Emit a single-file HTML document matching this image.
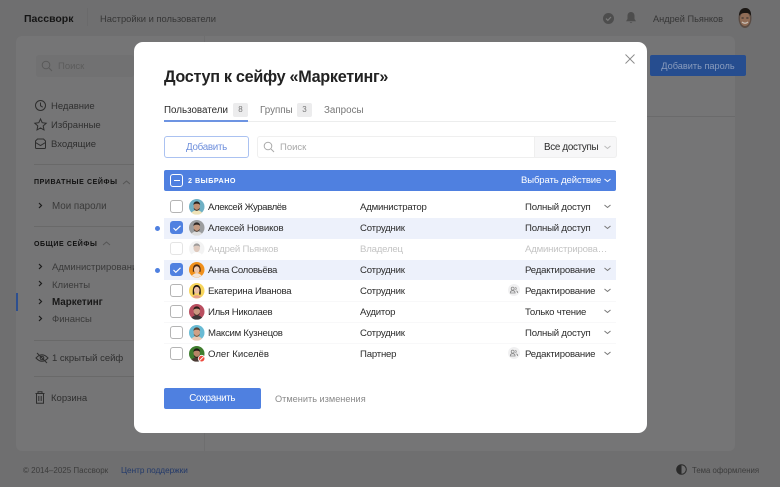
<!DOCTYPE html>
<html lang="ru"><head><meta charset="utf-8"><title>Пассворк</title>
<style>
*{box-sizing:border-box}
html,body{margin:0;padding:0}
body{width:780px;height:487px;position:relative;overflow:hidden;background:#6f6f70;font-family:"Liberation Sans","DejaVu Sans",sans-serif;font-size:10px;color:#2b2b2b}
.a,.t{position:absolute}
.t{white-space:nowrap;line-height:12px;height:12px;transform:translateY(1px)}
.r{margin-top:1px;font-size:9.6px;letter-spacing:-.2px}
.bgt{color:#2f2f2f}
.cb{position:absolute;left:170px;width:13px;height:13px;border:1px solid #b4b4b4;border-radius:3px;background:#fff}
.cb.on{background:#4f80e0;border-color:#4f80e0}
.cb.dis{border-color:#e4e4e4}
.av{position:absolute;left:188.5px;width:15.5px;height:15.5px}
.sep{position:absolute;left:164px;width:452px;height:1px;background:#f8f8f9}
svg{position:absolute;display:block;overflow:visible}
</style></head><body>

<!-- background app -->
<div class="a" style="left:16px;top:36px;width:719px;height:415px;background:#757576;border-radius:6px"></div>
<div class="a" style="left:204px;top:36px;width:1px;height:415px;background:#6e6e6f"></div>
<div class="a" style="left:205px;top:116px;width:530px;height:1px;background:#6a6a6b"></div>
<div class="a" style="left:87px;top:8px;width:1px;height:18px;background:#6a6a6b"></div>
<div class="t" style="left:24px;top:12px;font-size:10.5px;font-weight:bold;color:#151515">Пассворк</div>
<div class="t bgt" style="left:100px;top:12px;font-size:9.4px;color:#363636">Настройки и пользователи</div>
<svg style="left:602px;top:12px" width="13" height="13" viewBox="0 0 13 13"><circle cx="6.5" cy="6.5" r="5.5" fill="#4d4d4d"/><path d="M4 6.6l1.800 1.800L9 5" fill="none" stroke="#7a7a7a" stroke-width="1.2"/></svg>
<svg style="left:625px;top:11px" width="12" height="14" viewBox="0 0 12 14"><path d="M6 1C3.600 1 2.500 2.900 2.500 5v3L1 10.200h10L9.500 8V5C9.500 2.900 8.400 1 6 1z M4.700 11.200a1.400 1.400 0 0 0 2.600 0z" fill="#4d4d4d"/></svg>
<div class="t" style="left:653px;top:12px;font-size:9.2px;color:#363636">Андрей Пьянков</div>
<svg style="left:737px;top:8px" width="16" height="21" viewBox="0 0 16 21"><ellipse cx="8" cy="10" rx="6.500" ry="10" fill="#5a4c44"/><ellipse cx="8" cy="11" rx="5" ry="7" fill="#8f6c56"/><path d="M2 8C2 2 5 0 8.500 0S14.500 3 14 8C12.500 5 11 5 8 5S3.500 6 2 8z" fill="#1a1613"/><path d="M5 14q3 2.500 6 0" fill="none" stroke="#c8c0b8" stroke-width="1.200"/><rect x="4.500" y="9.500" width="2.200" height="1" fill="#2a2a2a"/><rect x="9.300" y="9.500" width="2.200" height="1" fill="#2a2a2a"/></svg>

<!-- sidebar -->
<div class="a" style="left:36px;top:55px;width:98px;height:22px;background:#717172;border-radius:3px"></div>
<svg style="left:41px;top:60px" width="12" height="12" viewBox="0 0 12 12" fill="none" stroke="#5a5a5a"><circle cx="5" cy="5" r="3.800"/><path d="M8 8l3 3"/></svg>
<div class="t" style="left:58px;top:60px;font-size:9.500px;color:#5c5c5c">Поиск</div>
<svg style="left:34px;top:99px" width="13" height="13" viewBox="0 0 13 13" fill="none" stroke="#2e2e2e"><circle cx="6.500" cy="6.500" r="5"/><path d="M6.500 3.500v3.200l2.200 1.500"/></svg>
<div class="t bgt" style="left:51px;top:100px;font-size:9.500px">Недавние</div>
<svg style="left:34px;top:118px" width="13" height="13" viewBox="0 0 13 13" fill="none" stroke="#2e2e2e"><path d="M6.500 1l1.700 3.700 4 .5-3 2.700.8 4-3.500-2-3.500 2 .8-4-3-2.700 4-.5z"/></svg>
<div class="t bgt" style="left:51px;top:119px;font-size:9.500px">Избранные</div>
<svg style="left:34px;top:137px" width="13" height="13" viewBox="0 0 13 13" fill="none" stroke="#2e2e2e"><path d="M1.500 7V4L3.500 2h6l2 2v6.500a1 1 0 0 1-1 1h-8a1 1 0 0 1-1-1z M1.500 5.500l5 3 5-3"/></svg>
<div class="t bgt" style="left:51px;top:138px;font-size:9.500px">Входящие</div>
<div class="a" style="left:34px;top:164px;width:100px;height:1px;background:#696969"></div>
<div class="t" style="left:34px;top:176px;font-size:7px;font-weight:bold;letter-spacing:.6px;color:#111">ПРИВАТНЫЕ СЕЙФЫ</div>
<svg style="left:122px;top:180px" width="9" height="5" fill="none" stroke="#555"><path d="M1 4l3.500-3L8 4"/></svg>
<svg style="left:38px;top:202px" width="5" height="7" fill="none" stroke="#1c1c1c" stroke-width="1.200"><path d="M1 1l2.500 2.500L1 6"/></svg>
<div class="t bgt" style="left:52px;top:200px;font-size:9.800px;color:#3a3a3a">Мои пароли</div>
<div class="a" style="left:34px;top:226px;width:100px;height:1px;background:#696969"></div>
<div class="t" style="left:34px;top:238px;font-size:7px;font-weight:bold;letter-spacing:.6px;color:#111">ОБЩИЕ СЕЙФЫ</div>
<svg style="left:102px;top:241px" width="9" height="5" fill="none" stroke="#555"><path d="M1 4l3.500-3L8 4"/></svg>
<svg style="left:38px;top:263px" width="5" height="7" fill="none" stroke="#1c1c1c" stroke-width="1.200"><path d="M1 1l2.500 2.500L1 6"/></svg>
<div class="t bgt" style="left:52px;top:261px;font-size:9.500px;color:#3a3a3a">Администрирование</div>
<svg style="left:38px;top:280px" width="5" height="7" fill="none" stroke="#1c1c1c" stroke-width="1.200"><path d="M1 1l2.500 2.500L1 6"/></svg>
<div class="t bgt" style="left:52px;top:279px;font-size:9.500px;color:#3a3a3a">Клиенты</div>
<svg style="left:38px;top:298px" width="5" height="7" fill="none" stroke="#1c1c1c" stroke-width="1.200"><path d="M1 1l2.500 2.500L1 6"/></svg>
<div class="t" style="left:52px;top:296px;font-size:9.800px;font-weight:bold;color:#181818">Маркетинг</div>
<svg style="left:38px;top:315px" width="5" height="7" fill="none" stroke="#1c1c1c" stroke-width="1.200"><path d="M1 1l2.500 2.500L1 6"/></svg>
<div class="t bgt" style="left:52px;top:313px;font-size:9.500px;color:#3a3a3a">Финансы</div>
<div class="a" style="left:16px;top:293px;width:2px;height:18px;background:#2d4f8f"></div>
<div class="a" style="left:34px;top:340px;width:100px;height:1px;background:#696969"></div>
<svg style="left:35px;top:352px" width="14" height="12" viewBox="0 0 14 12" fill="none" stroke="#2e2e2e"><path d="M1 6q6-6.500 12 0q-6 6.500-12 0z M2 1l10 10"/><circle cx="7" cy="6" r="1.800"/></svg>
<div class="t bgt" style="left:52px;top:352px;font-size:9.500px">1 скрытый сейф</div>
<div class="a" style="left:34px;top:376px;width:100px;height:1px;background:#696969"></div>
<svg style="left:35px;top:391px" width="10" height="13" viewBox="0 0 10 13" fill="none" stroke="#2e2e2e"><path d="M.5 2.500h9 M3 2.500V.8h4v1.700 M1.500 2.500v9.700h7V2.500 M3.800 5v5 M6.200 5v5"/></svg>
<div class="t bgt" style="left:51px;top:392px;font-size:9.500px">Корзина</div>

<!-- add password -->
<div class="a" style="left:650px;top:55px;width:96px;height:21px;background:#264d8f;border-radius:2px"></div>
<div class="t" style="left:650px;top:59px;width:96px;text-align:center;font-size:9.200px;color:#8a9cbd">Добавить пароль</div>

<!-- footer -->
<div class="t" style="left:23px;top:464px;font-size:8px;color:#3c3c3c">© 2014–2025 Пассворк</div>
<div class="t" style="left:121px;top:464px;font-size:8.200px;color:#22396a">Центр поддержки</div>
<svg style="left:676px;top:464px" width="11" height="11" viewBox="0 0 11 11"><circle cx="5.500" cy="5.500" r="4.800" fill="none" stroke="#2a2a2a"/><path d="M5.500.7a4.800 4.800 0 0 0 0 9.600z" fill="#2a2a2a"/></svg>
<div class="t" style="left:692px;top:464px;font-size:7.800px;color:#3c3c3c">Тема оформления</div>

<!-- modal -->
<div class="a" style="left:134px;top:42px;width:512.500px;height:391px;background:#fff;border-radius:9px"></div>
<svg style="left:625px;top:54px" width="10" height="10" viewBox="0 0 10 10" fill="none" stroke="#8a8a8a" stroke-width=".9"><path d="M.5.500l9 9M9.500.500l-9 9"/></svg>
<div class="t" style="left:164px;top:66px;height:20px;line-height:20px;font-size:16.200px;font-weight:bold;letter-spacing:-.3px;color:#222">Доступ к сейфу «Маркетинг»</div>

<!-- tabs -->
<div class="a" style="left:164px;top:121px;width:452px;height:1px;background:#eceded"></div>
<div class="a" style="left:164px;top:120px;width:84px;height:2px;background:#6d94e2"></div>
<div class="t" style="left:164px;top:104px;font-size:9.800px;color:#2a2a2a">Пользователи</div>
<div class="a" style="left:233px;top:102.500px;width:15px;height:14px;background:#ececed;border-radius:2px;font-size:8px;line-height:14px;text-align:center;color:#777">8</div>
<div class="t" style="left:260px;top:104px;font-size:9.800px;color:#777">Группы</div>
<div class="a" style="left:297px;top:102.500px;width:15px;height:14px;background:#ececed;border-radius:2px;font-size:8px;line-height:14px;text-align:center;color:#777">3</div>
<div class="t" style="left:324px;top:104px;font-size:9.800px;color:#777">Запросы</div>

<!-- controls -->
<div class="a" style="left:164px;top:136px;width:85px;height:22px;border:1px solid #abc2f1;border-radius:3px;background:#fff;font-size:9.800px;letter-spacing:-.3px;line-height:21px;text-align:center;color:#6e8fdc">Добавить</div>
<div class="a" style="left:257px;top:136px;width:360px;height:22px;border:1px solid #efefef;border-radius:3px;background:#fff"></div>
<div class="a" style="left:534px;top:136px;width:83px;height:22px;border:1px solid #efefef;border-radius:0 3px 3px 0;background:#f7f7f8"></div>
<svg style="left:263px;top:141px" width="12" height="12" viewBox="0 0 12 12" fill="none" stroke="#aaa"><circle cx="5" cy="5" r="3.800"/><path d="M8 8l3 3"/></svg>
<div class="t" style="left:280px;top:141px;font-size:9.500px;color:#a8a8a8">Поиск</div>
<div class="t" style="left:544px;top:141px;font-size:9.800px;letter-spacing:-.3px;color:#2a2a2a">Все доступы</div>
<svg style="left:604px;top:145px" width="7" height="5" fill="none" stroke="#bbb"><path d="M.5 1l3 2.500 3-2.500"/></svg>

<!-- selection bar -->
<div class="a" style="left:164px;top:170px;width:452px;height:21px;background:#4f80e0;border-radius:2px"></div>
<div class="a" style="left:170px;top:174px;width:13px;height:13px;border:1px solid #fff;border-radius:3px"></div>
<div class="a" style="left:173.500px;top:180px;width:6px;height:1px;background:#fff"></div>
<div class="t" style="left:188px;top:174px;font-size:7.200px;font-weight:bold;letter-spacing:.5px;color:#fff">2 ВЫБРАНО</div>
<div class="t" style="left:521px;top:174px;font-size:9.500px;letter-spacing:-.1px;color:#fff">Выбрать действие</div>
<svg style="left:604px;top:178px" width="7" height="5" fill="none" stroke="#fff"><path d="M.5 1l3 2.500 3-2.500"/></svg>

<!-- rows -->
<div class="a" style="left:164px;top:218px;width:452px;height:20.500px;background:#edf1fb"></div>
<div class="a" style="left:164px;top:259.500px;width:452px;height:20.500px;background:#edf1fb"></div>
<div class="sep" style="top:301px"></div>
<div class="sep" style="top:322px"></div>
<div class="sep" style="top:343px"></div>
<div class="a" style="left:155px;top:226px;width:5px;height:5px;border-radius:50%;background:#4f80e0"></div>
<div class="a" style="left:155px;top:268px;width:5px;height:5px;border-radius:50%;background:#4f80e0"></div>

<div class="cb" style="top:200px"></div>
<div class="cb on" style="top:221px"><svg style="left:2px;top:3px" width="8" height="6" fill="none" stroke="#fff" stroke-width="1.100"><path d="M.5 3l2.300 2.300L7.500.8"/></svg></div>
<div class="cb dis" style="top:242px"></div>
<div class="cb on" style="top:263px"><svg style="left:2px;top:3px" width="8" height="6" fill="none" stroke="#fff" stroke-width="1.100"><path d="M.5 3l2.300 2.300L7.500.8"/></svg></div>
<div class="cb" style="top:284px"></div>
<div class="cb" style="top:305px"></div>
<div class="cb" style="top:326px"></div>
<div class="cb" style="top:347px"></div>

<!-- avatars -->
<svg class="av" style="top:199px" viewBox="0 0 16 16"><circle cx="8" cy="8" r="8" fill="#6fb0c4"/><path d="M2.500 14q5.500-5 11 0a8 8 0 0 1-11 0z" fill="#efe3b8"/><ellipse cx="8" cy="7.500" rx="3.300" ry="4" fill="#c08f72"/><path d="M4.500 6q.5-3.500 3.500-3.500T11.500 6Q10 4.800 8 4.800T4.500 6z" fill="#2a211c"/><path d="M5 9q3 4.500 6 0v1.500q-3 3.500-6 0z" fill="#3a2c24"/></svg>
<svg class="av" style="top:220px" viewBox="0 0 16 16"><circle cx="8" cy="8" r="8" fill="#9b9d9f"/><path d="M2.500 14q5.500-5 11 0a8 8 0 0 1-11 0z" fill="#dcdcdc"/><ellipse cx="8" cy="7.500" rx="3.300" ry="4" fill="#c49a80"/><path d="M4.500 6q.5-3.500 3.500-3.500T11.500 6Q10 4.800 8 4.800T4.500 6z" fill="#2c2623"/><path d="M5 9q3 4.500 6 0v1.500q-3 3.500-6 0z" fill="#4a3a30"/></svg>
<svg class="av" style="top:241px;opacity:.45" viewBox="0 0 16 16"><circle cx="8" cy="8" r="8" fill="#e6e6e6"/><path d="M2.500 14q5.500-5 11 0a8 8 0 0 1-11 0z" fill="#fff"/><ellipse cx="8" cy="7.500" rx="3.300" ry="4" fill="#b98c70"/><path d="M4.500 6q.5-3.500 3.500-3.500T11.500 6Q10 4.800 8 4.800T4.500 6z" fill="#2c2623"/></svg>
<svg class="av" style="top:262px" viewBox="0 0 16 16"><circle cx="8" cy="8" r="8" fill="#f0901c"/><path d="M3 14q5-5 10 0a8 8 0 0 1-10 0z" fill="#f1e4d8"/><path d="M4 10Q3.500 2.500 8 2.500T12 10H10.500V6h-5v4z" fill="#4a2a18"/><ellipse cx="8" cy="8" rx="2.900" ry="3.600" fill="#efc6a8"/></svg>
<svg class="av" style="top:283px" viewBox="0 0 16 16"><circle cx="8" cy="8" r="8" fill="#f7d55c"/><path d="M3.500 14.500q4.500-4 9 0a8 8 0 0 1-9 0z" fill="#e8a08c"/><path d="M4 12Q3 2 8 2t4 10h-1.500V6h-5v6z" fill="#1e1612"/><ellipse cx="8" cy="7.500" rx="2.900" ry="3.600" fill="#ecbea4"/></svg>
<svg class="av" style="top:304px" viewBox="0 0 16 16"><circle cx="8" cy="8" r="8" fill="#b94f60"/><path d="M2.500 14q5.500-5 11 0a8 8 0 0 1-11 0z" fill="#3c3436"/><ellipse cx="8" cy="7.500" rx="3.300" ry="4" fill="#c99880"/><path d="M4.500 6q.5-3.500 3.500-3.500T11.500 6Q10 4.800 8 4.800T4.500 6z" fill="#2a1f1b"/><path d="M5 9q3 4.500 6 0v1.500q-3 3.500-6 0z" fill="#4a3228"/></svg>
<svg class="av" style="top:325px" viewBox="0 0 16 16"><circle cx="8" cy="8" r="8" fill="#69bbd4"/><path d="M2.500 14q5.500-5 11 0a8 8 0 0 1-11 0z" fill="#e9c9b4"/><ellipse cx="8" cy="7.500" rx="3.300" ry="4" fill="#d0a084"/><path d="M4.500 6q.5-3.500 3.500-3.500T11.500 6Q10 4.800 8 4.800T4.500 6z" fill="#5a4232"/><path d="M5 9q3 4.500 6 0v1.500q-3 3.500-6 0z" fill="#6a4c38"/></svg>
<svg class="av" style="top:346px" viewBox="0 0 16 16"><circle cx="8" cy="8" r="8" fill="#3f7d2e"/><path d="M2.500 14q5.500-5 11 0a8 8 0 0 1-11 0z" fill="#4a3a34"/><ellipse cx="8" cy="7.500" rx="3.300" ry="4" fill="#b98468"/><path d="M4.500 6q.5-3.500 3.500-3.500T11.500 6Q10 4.800 8 4.800T4.500 6z" fill="#1d1613"/><path d="M5 9q3 4.500 6 0v1.500q-3 3.500-6 0z" fill="#2a1e18"/><circle cx="13" cy="13" r="3.800" fill="#fff"/><circle cx="13" cy="13" r="3" fill="#ee4b3f"/><path d="M11 15l4-4" stroke="#fff" stroke-width="1"/></svg>

<!-- names -->
<div class="t r" style="left:208px;top:200px;letter-spacing:-.4px">Алексей Журавлёв</div>
<div class="t r" style="left:208px;top:221px;letter-spacing:-.12px">Алексей Новиков</div>
<div class="t r" style="left:208px;top:242px;letter-spacing:-.21px;color:#c4c4c4">Андрей Пьянков</div>
<div class="t r" style="left:208px;top:263px;letter-spacing:-.35px">Анна Соловьёва</div>
<div class="t r" style="left:208px;top:284px;letter-spacing:-.26px">Екатерина Иванова</div>
<div class="t r" style="left:208px;top:305px;letter-spacing:-.32px">Илья Николаев</div>
<div class="t r" style="left:208px;top:326px;letter-spacing:-.25px">Максим Кузнецов</div>
<div class="t r" style="left:208px;top:347px;letter-spacing:-.03px">Олег Киселёв</div>

<!-- roles -->
<div class="t r" style="left:360px;top:200px">Администратор</div>
<div class="t r" style="left:360px;top:221px">Сотрудник</div>
<div class="t r" style="left:360px;top:242px;color:#c4c4c4">Владелец</div>
<div class="t r" style="left:360px;top:263px">Сотрудник</div>
<div class="t r" style="left:360px;top:284px">Сотрудник</div>
<div class="t r" style="left:360px;top:305px">Аудитор</div>
<div class="t r" style="left:360px;top:326px">Сотрудник</div>
<div class="t r" style="left:360px;top:347px">Партнер</div>

<!-- access -->
<div class="t r" style="left:525px;top:200px">Полный доступ</div>
<div class="t r" style="left:525px;top:221px">Полный доступ</div>
<div class="t r" style="left:525px;top:242px;color:#c4c4c4;width:86px;overflow:hidden;text-overflow:ellipsis">Администрирование</div>
<div class="t r" style="left:525px;top:263px">Редактирование</div>
<div class="t r" style="left:525px;top:284px">Редактирование</div>
<div class="t r" style="left:525px;top:305px">Только чтение</div>
<div class="t r" style="left:525px;top:326px">Полный доступ</div>
<div class="t r" style="left:525px;top:347px">Редактирование</div>

<svg style="left:604px;top:204px" width="7" height="5" fill="none" stroke="#777"><path d="M.5 1l3 2.500 3-2.500"/></svg>
<svg style="left:604px;top:225px" width="7" height="5" fill="none" stroke="#777"><path d="M.5 1l3 2.500 3-2.500"/></svg>
<svg style="left:604px;top:267px" width="7" height="5" fill="none" stroke="#777"><path d="M.5 1l3 2.500 3-2.500"/></svg>
<svg style="left:604px;top:288px" width="7" height="5" fill="none" stroke="#777"><path d="M.5 1l3 2.500 3-2.500"/></svg>
<svg style="left:604px;top:309px" width="7" height="5" fill="none" stroke="#777"><path d="M.5 1l3 2.500 3-2.500"/></svg>
<svg style="left:604px;top:330px" width="7" height="5" fill="none" stroke="#777"><path d="M.5 1l3 2.500 3-2.500"/></svg>
<svg style="left:604px;top:351px" width="7" height="5" fill="none" stroke="#777"><path d="M.5 1l3 2.500 3-2.500"/></svg>

<!-- group icons -->
<svg style="left:508px;top:284px" width="12" height="12" viewBox="0 0 12 12"><circle cx="6" cy="6" r="6" fill="#f0f0f1"/><g fill="none" stroke="#888" stroke-width=".8"><circle cx="4.700" cy="4.600" r="1.500"/><path d="M2.300 9q0-2.300 2.400-2.300T7.100 9z"/><path d="M7.300 3.200a1.500 1.500 0 0 1 0 2.800M8.200 6.900q1.500.3 1.500 2.100"/></g></svg>
<svg style="left:508px;top:347px" width="12" height="12" viewBox="0 0 12 12"><circle cx="6" cy="6" r="6" fill="#f0f0f1"/><g fill="none" stroke="#888" stroke-width=".8"><circle cx="4.700" cy="4.600" r="1.500"/><path d="M2.300 9q0-2.300 2.400-2.300T7.100 9z"/><path d="M7.300 3.200a1.500 1.500 0 0 1 0 2.800M8.200 6.900q1.500.3 1.500 2.100"/></g></svg>

<!-- bottom buttons -->
<div class="a" style="left:164px;top:388px;width:96.500px;height:21px;background:#4f80e0;border-radius:2px;font-size:9.800px;letter-spacing:-.3px;line-height:21px;text-align:center;color:#fff">Сохранить</div>
<div class="t" style="left:275px;top:392px;font-size:9.200px;color:#8a8a8a">Отменить изменения</div>
</body></html>
